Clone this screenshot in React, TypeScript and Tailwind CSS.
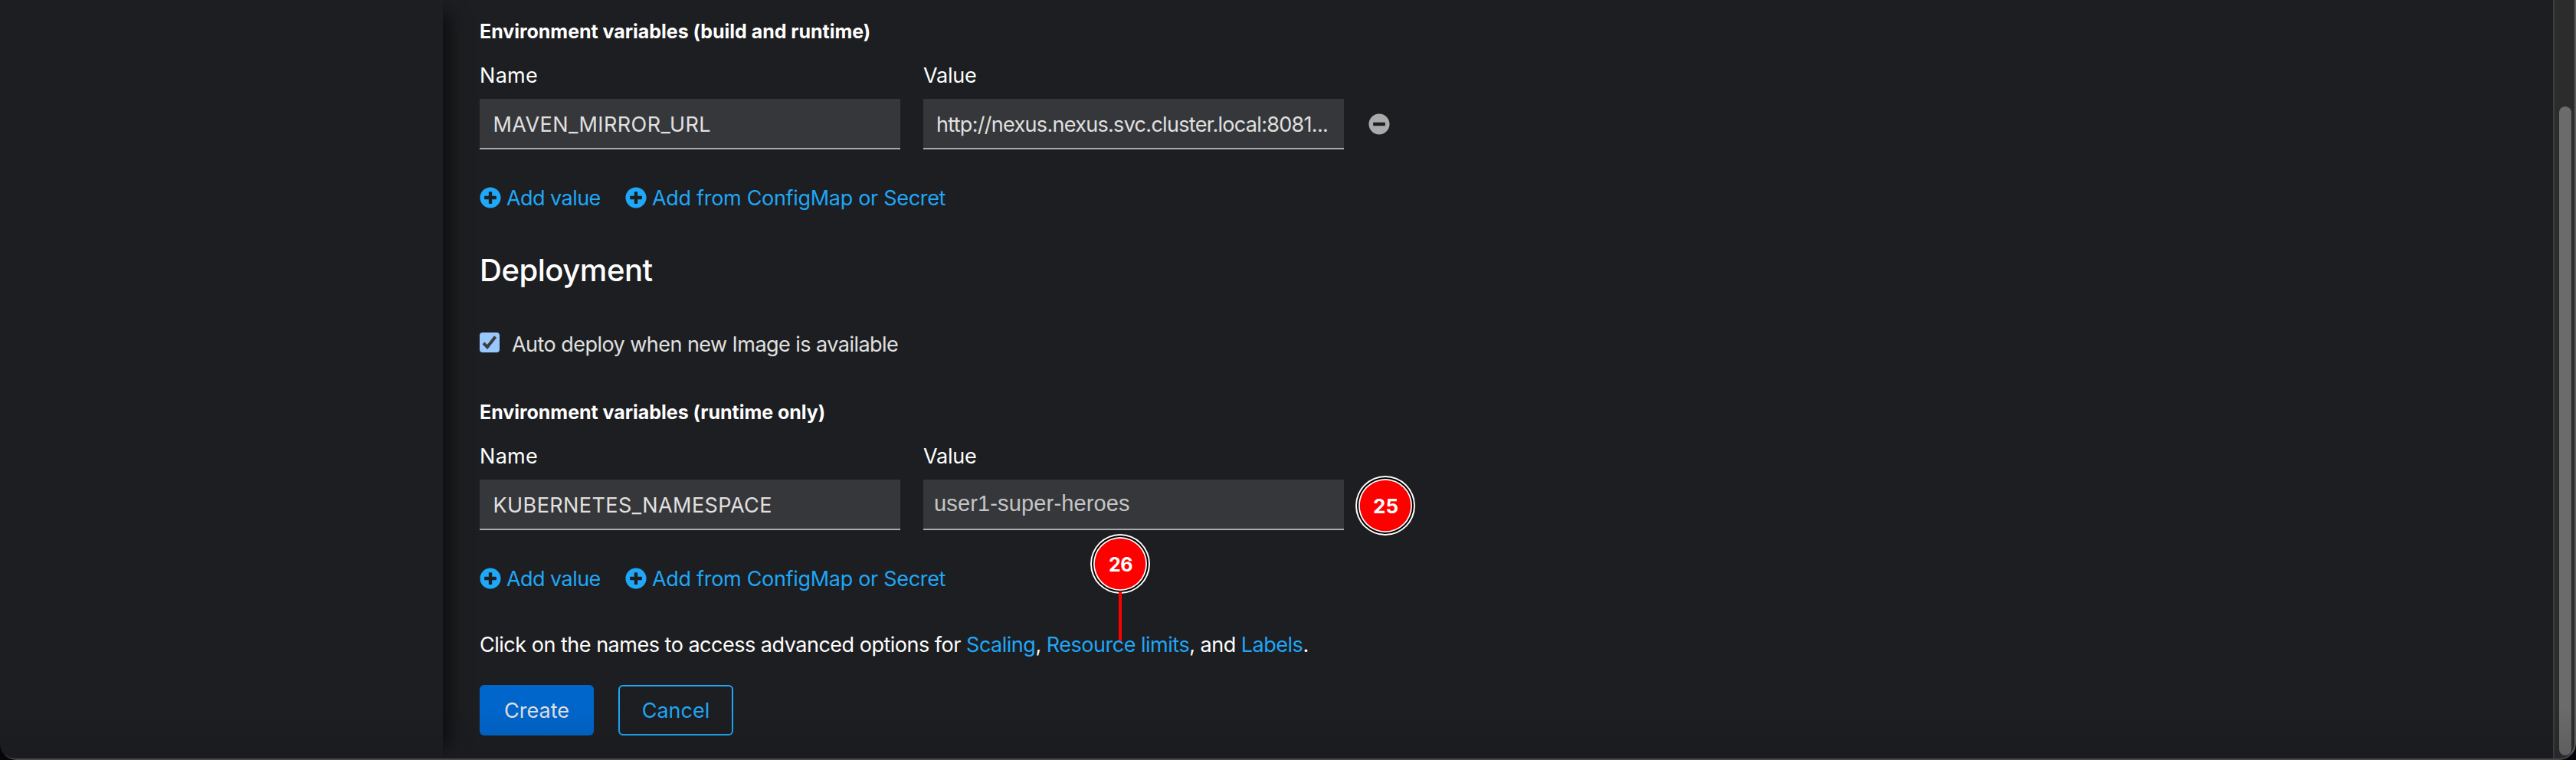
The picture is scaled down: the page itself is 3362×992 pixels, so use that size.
import type { ReactNode } from 'react';
import { FaMinusCircle, FaPlusCircle } from 'react-icons/fa';

function AddLinks() {
  return (
    <div className="mt-[42px] flex h-[42px] items-center text-[#1fa7f8]">
      <button className="flex w-[190px] items-center gap-[7px] whitespace-nowrap tracking-[-0.55px]">
        <FaPlusCircle className="size-[28px] shrink-0" />
        <span className="pt-[2px]">Add value</span>
      </button>
      <button className="flex items-center gap-[7px] whitespace-nowrap tracking-[-0.31px]">
        <FaPlusCircle className="size-[28px] shrink-0" />
        <span className="pt-[2px]">Add from ConfigMap or Secret</span>
      </button>
    </div>
  );
}

function Field({ label, tracking, children }: { label: string; tracking: string; children: ReactNode }) {
  return (
    <div className="w-[549px]">
      <div className={`h-[42px] leading-[44px] text-white ${tracking}`}>{label}</div>
      <div className="mt-[10px] h-[66px] overflow-hidden border-b-2 border-[#aaabac] bg-[#36373a] leading-[67px] whitespace-nowrap text-[#e0e0e0]">
        {children}
      </div>
    </div>
  );
}

function EnvSection({ title, name, value, action }: { title: string; name: string; value: ReactNode; action: ReactNode }) {
  return (
    <section className="h-[258px]">
      <h3 className="h-[40px] text-[25px] leading-[40px] font-bold tracking-[-0.03px] text-white">{title}</h3>
      <div className="mt-4 flex h-[118px] gap-[30px]">
        <Field label="Name" tracking="tracking-[0.3px]">
          <span className="pl-[17.5px] tracking-[0.41px]">{name}</span>
        </Field>
        <Field label="Value" tracking="tracking-[-0.2px]">{value}</Field>
        {action}
      </div>
      <AddLinks />
    </section>
  );
}

function Marker({ n, size }: { n: number; size: string }) {
  return (
    <svg viewBox="-39 -39 78 78" className="size-[78px] shrink-0">
      <circle r="39" fill="#fff" />
      <circle r="37" fill="#000" />
      <circle r="35" fill="#fff" />
      <circle r="33.3" fill="#f00" />
      <text x="0.5" y="10" textAnchor="middle" fill="#fff" className={`font-bold ${size}`}>
        {n}
      </text>
    </svg>
  );
}

export default function App() {
  return (
    <div className="h-[992px] w-full overflow-hidden bg-[#05050d]">
      <div className="relative flex h-full overflow-hidden rounded-b-[22px] bg-[#1d1e21] font-['Inter',sans-serif] text-[27px] text-[#e0e0e0]">
        <aside className="h-full w-[578px] shrink-0 bg-[#1d1e21] shadow-[24px_0_24px_-16px_rgba(0,0,0,0.6)]" />

        <main className="flex-1 pt-[21px] pl-[48px]">
          <EnvSection
            title="Environment variables (build and runtime)"
            name="MAVEN_MIRROR_URL"
            value={<span className="pl-[17px] tracking-[-0.7px]">http://nexus.nexus.svc.cluster.local:8081...</span>}
            action={<FaMinusCircle className="mt-[71px] ml-[1.5px] size-[28px] text-[#a9aaac]" />}
          />

          <h2 className="mt-[44px] h-[60px] text-[40px] leading-[60px] font-medium tracking-[-0.45px] text-white">Deployment</h2>

          <label className="mt-[45px] flex h-[42px] leading-[44px]">
            <span className="mt-[6px] mr-[16px] block size-[26px] rounded-[4px] bg-[#99c8ff]">
              <svg viewBox="0 0 26 26" className="size-[26px]" fill="none" stroke="#3c3c3c" strokeWidth="4">
                <path d="M5 13.8 10 19 20.6 5.4" />
              </svg>
            </span>
            <span className="tracking-[-0.54px]">Auto deploy when new Image is available</span>
          </label>

          <div className="mt-[48px]">
            <EnvSection
              title="Environment variables (runtime only)"
              name="KUBERNETES_NAMESPACE"
              value={
                <span className="block pl-[14px] font-['Liberation_Sans',sans-serif] text-[29px] leading-[62px] tracking-[0.15px] text-[#c4c5c6]">
                  user1-super-heroes
                </span>
              }
              action={
                <div className="mt-[47px] -ml-[15px]">
                  <Marker n={25} size="text-[26px]" />
                </div>
              }
            />
          </div>

          <p className="mt-[44px] h-[42px] leading-[43px] whitespace-nowrap tracking-[-0.49px] text-white">
            Click on the names to access advanced options for <a className="text-[#1fa7f8]">Scaling</a>,{' '}
            <span className="relative">
              <a className="text-[#1fa7f8]">Resource limits</a>
              <span className="absolute bottom-[22.5px] left-[57.5px] flex h-[139px] w-[78px] flex-col items-center">
                <Marker n={26} size="text-[25px]" />
                <span className="-mt-[3px] w-[4px] flex-1 bg-[#f00]" />
              </span>
            </span>
            , and <a className="text-[#1fa7f8]">Labels</a>.
          </p>

          <div className="mt-[32px] flex gap-[32px]">
            <button className="h-[66px] w-[149px] rounded-[6px] bg-[#0066cc] pt-[2px]">Create</button>
            <button className="h-[66px] w-[150px] rounded-[6px] border-2 border-[#1fa7f8] pt-[2px] text-[#1fa7f8]">Cancel</button>
          </div>
        </main>

        <div className="h-full w-[30px] shrink-0 border-l-2 border-[#3e3e3e] bg-[#2c2c2c] pt-[139px] pl-[6px]">
          <div className="h-[847px] w-[16px] rounded-full bg-[#6b6b6b]" />
        </div>

        <div className="pointer-events-none absolute inset-x-0 bottom-0 h-[70px] bg-linear-to-b from-transparent to-[#0f0f1a]/15" />
        <div className="pointer-events-none absolute inset-y-0 right-0 -left-[2px] rounded-b-[22px] border-r-2 border-b-2 border-l-2 border-r-[#5e5e5e] border-b-[#48474b] border-l-transparent" />
      </div>
    </div>
  );
}
